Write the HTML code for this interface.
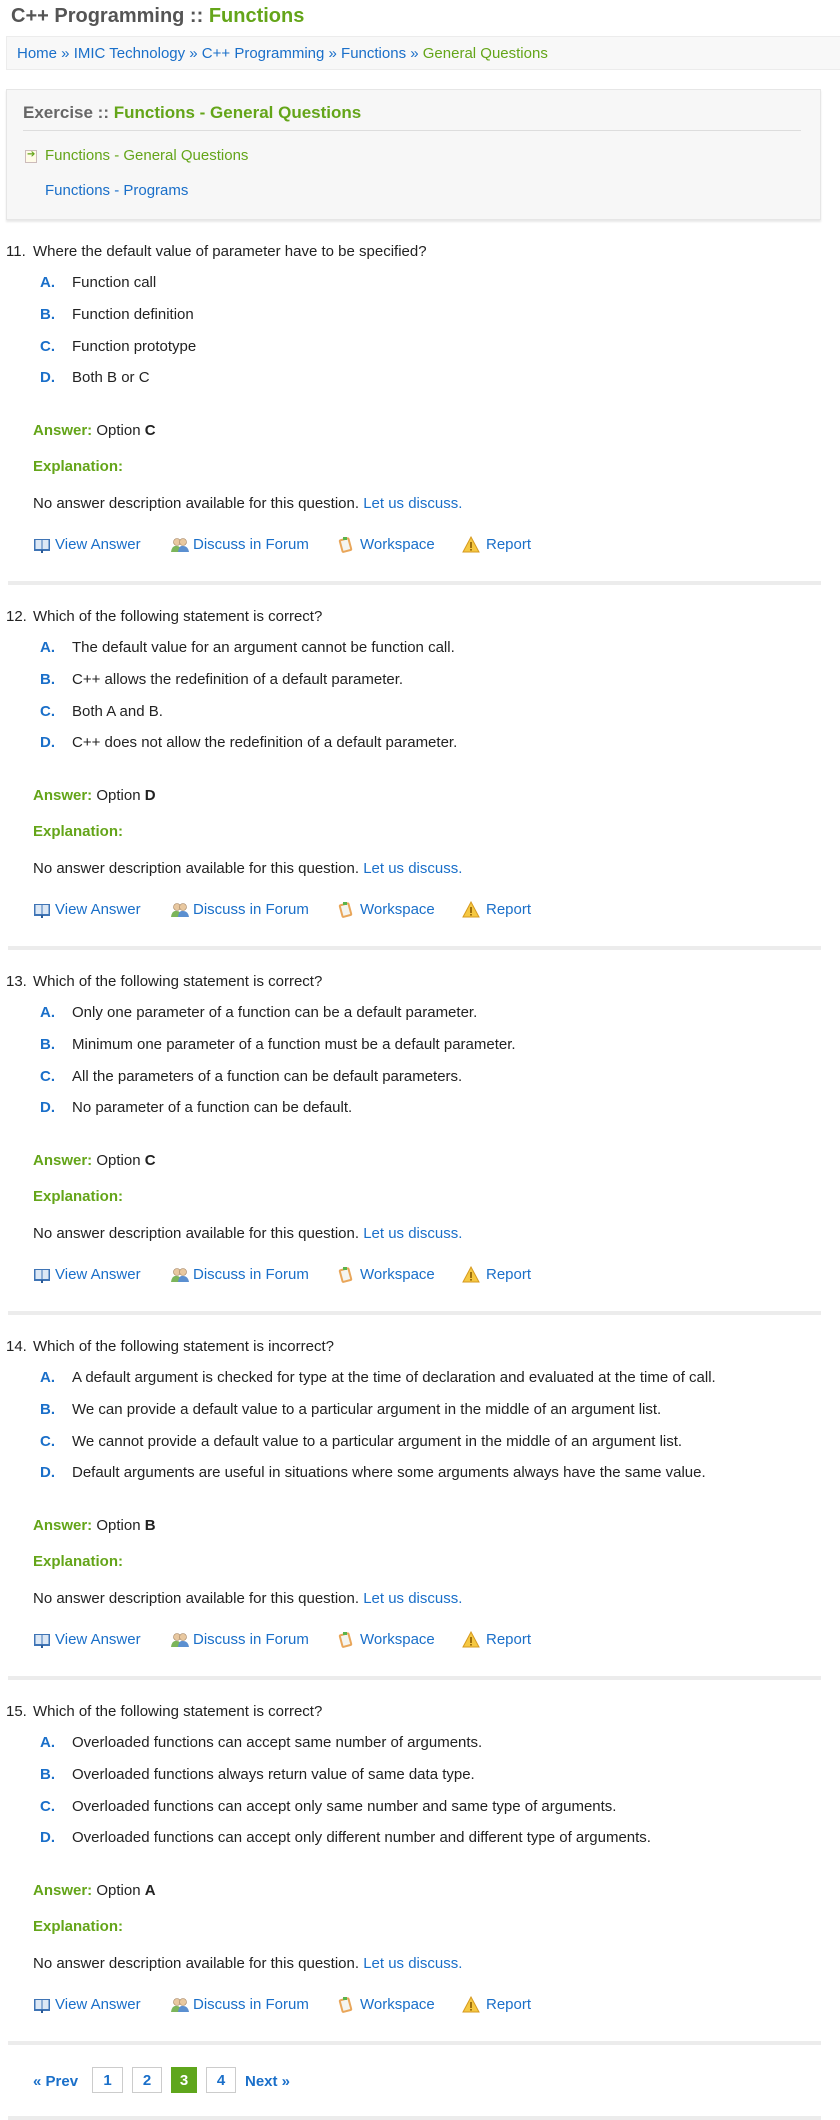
<!DOCTYPE html>
<html><head><meta charset="utf-8"><style>
body{margin:0;width:840px;height:2120px;position:relative;background:#fff;font-family:"Liberation Sans",Arial,sans-serif;font-size:15px;color:#222;overflow:hidden}
.a{position:absolute;line-height:20px;white-space:nowrap}
.b{color:#1a6fc9}.g{color:#64a519}
.t{font-weight:bold;font-size:20px;color:#555}
.l{font-weight:bold;color:#1a6fc9}
.sep{position:absolute;left:8px;width:813px;height:4px;background:#ececec}
.pg{position:absolute;top:2067px;height:26px;border:1px solid #ccc;text-align:center;line-height:26px;font-weight:bold;color:#1a6fc9;box-sizing:border-box}
svg{position:absolute}
</style></head><body>
<div class="a t" style="left:11px;top:4px;line-height:24px">C++ Programming :: <span class="g">Functions</span></div>
<div style="position:absolute;left:6px;top:36px;width:840px;height:34px;background:#f8f8f8;border:1px solid #ececec;box-sizing:border-box"></div>
<div class="a b" style="left:17px;top:44px">Home » IMIC Technology » C++ Programming » Functions » <span class="g">General Questions</span></div>
<div style="position:absolute;left:6px;top:89px;width:815px;height:131px;background:#f7f7f7;border:1px solid #e6e6e6;box-sizing:border-box;box-shadow:0 2px 2px #e8e8e8"></div>
<div class="a" style="left:23px;top:103px;font-weight:bold;font-size:17px;color:#666">Exercise :: <span class="g">Functions - General Questions</span></div>
<div style="position:absolute;left:23px;top:130px;width:778px;height:1px;background:#ddd"></div>
<div style="position:absolute;left:25px;top:150px;width:10px;height:11px;border:1px solid #cbb;background:#fffbe8"></div><div class="a g" style="left:27px;top:145px;font-size:10px">➔</div>
<div class="a g" style="left:45px;top:146px">Functions - General Questions</div>
<div class="a b" style="left:45px;top:181px">Functions - Programs</div>

<div id="c"></div>
<script>
var Q=[["11","Where the default value of parameter have to be specified?",["Function call","Function definition","Function prototype","Both B or C"],"C"],
["12","Which of the following statement is correct?",["The default value for an argument cannot be function call.","C++ allows the redefinition of a default parameter.","Both A and B.","C++ does not allow the redefinition of a default parameter."],"D"],
["13","Which of the following statement is correct?",["Only one parameter of a function can be a default parameter.","Minimum one parameter of a function must be a default parameter.","All the parameters of a function can be default parameters.","No parameter of a function can be default."],"C"],
["14","Which of the following statement is incorrect?",["A default argument is checked for type at the time of declaration and evaluated at the time of call.","We can provide a default value to a particular argument in the middle of an argument list.","We cannot provide a default value to a particular argument in the middle of an argument list.","Default arguments are useful in situations where some arguments always have the same value."],"B"],
["15","Which of the following statement is correct?",["Overloaded functions can accept same number of arguments.","Overloaded functions always return value of same data type.","Overloaded functions can accept only same number and same type of arguments.","Overloaded functions can accept only different number and different type of arguments."],"A"]];
var h="";
Q.forEach(function(q,i){var y=252+365*i-10;
h+='<div class="a" style="left:6px;top:'+y+'px">'+q[0]+'.</div><div class="a" style="left:33px;top:'+y+'px">'+q[1]+'</div>';
var off=[31,63,95,126];
"ABCD".split("").forEach(function(L,j){h+='<div class="a l" style="left:40px;top:'+(y+off[j])+'px">'+L+'.</div><div class="a" style="left:72px;top:'+(y+off[j])+'px">'+q[2][j]+'</div>';});
h+='<div class="a" style="left:33px;top:'+(y+179)+'px"><b class="g">Answer:</b> Option <b>'+q[3]+'</b></div>';
h+='<div class="a g" style="left:33px;top:'+(y+215)+'px;font-weight:bold">Explanation:</div>';
h+='<div class="a" style="left:33px;top:'+(y+252)+'px">No answer description available for this question. <span class="b">Let us discuss.</span></div>';
var ly=y+293;
h+='<svg style="left:33px;top:'+(ly+3)+'px" width="18" height="15"><rect x="1" y="1" width="16" height="12" fill="#3f74b5"/><rect x="2.5" y="2" width="6" height="9" fill="#dde8f5"/><rect x="9.5" y="2" width="6" height="9" fill="#dde8f5"/><rect x="8" y="12" width="2" height="3" fill="#2a5a96"/></svg>';
h+='<div class="a b" style="left:55px;top:'+ly+'px">View Answer</div>';
h+='<svg style="left:170px;top:'+(ly+2)+'px" width="20" height="16"><circle cx="7" cy="5" r="3.5" fill="#e8c8a0" stroke="#a08060" stroke-width=".6"/><circle cx="13" cy="5" r="3.5" fill="#e8c8a0" stroke="#a08060" stroke-width=".6"/><path d="M1 15 Q2 8 7 9 Q11 9 12 15Z" fill="#7cb55a"/><path d="M8 15 Q9 8 13 9 Q18 9 19 15Z" fill="#5b8fd0"/></svg>';
h+='<div class="a b" style="left:193px;top:'+ly+'px">Discuss in Forum</div>';
h+='<svg style="left:337px;top:'+(ly+1)+'px" width="18" height="18"><rect x="3" y="2" width="11" height="14" rx="2" fill="#e9a65a" transform="rotate(-15 9 9)"/><rect x="5" y="4" width="7" height="10" fill="#f4f4f0" transform="rotate(-15 9 9)"/><rect x="6" y="1" width="4" height="3" fill="#5bb34a"/></svg>';
h+='<div class="a b" style="left:360px;top:'+ly+'px">Workspace</div>';
h+='<svg style="left:462px;top:'+(ly+1)+'px" width="18" height="18"><path d="M9 1 L17 16 L1 16Z" fill="#f5c842" stroke="#d69a20"/><rect x="8.2" y="6" width="1.6" height="6" fill="#8a5a00"/><rect x="8.2" y="13" width="1.6" height="1.6" fill="#8a5a00"/></svg>';
h+='<div class="a b" style="left:486px;top:'+ly+'px">Report</div>';
h+='<div class="sep" style="top:'+(y+339)+'px"></div>';
});
document.getElementById("c").innerHTML=h;
</script>
<div class="a" style="left:33px;top:2072px;font-weight:bold;color:#1a6fc9">« Prev</div>
<div class="pg" style="left:92px;width:31px">1</div>
<div class="pg" style="left:132px;width:30px">2</div>
<div class="pg" style="left:171px;width:26px;background:#5fa61c;border-color:#5fa61c;color:#fff">3</div>
<div class="pg" style="left:206px;width:30px">4</div>
<div class="a" style="left:245px;top:2072px;font-weight:bold;color:#1a6fc9">Next »</div>
<div class="sep" style="top:2116px"></div>
</body></html>
